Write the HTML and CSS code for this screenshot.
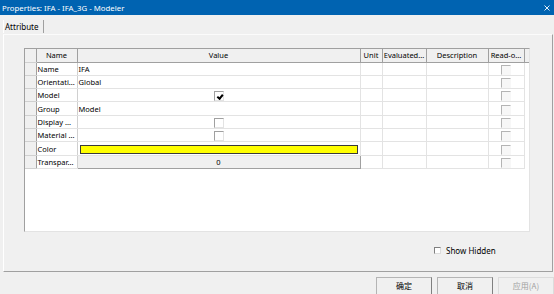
FILE: index.html
```html
<!DOCTYPE html>
<html lang="en">
<head>
    <meta charset="UTF-8">
    <meta name="viewport" content="width=device-width, initial-scale=1.0">
    <title>Properties: IFA - IFA_3G - Modeler</title>
    <link rel="stylesheet" href="styles.css">
</head>
<body>
    <div class="titlebar">
        <span>Properties: IFA - IFA_3G - Modeler</span>
        <svg class="close" width="6" height="6" viewBox="0 0 6 6">
            <path d="M0.5 0.5 L5.5 5.5 M5.5 0.5 L0.5 5.5" stroke="#fff" stroke-width="0.9" fill="none"/>
        </svg>
    </div>

    <div class="tabs">
        <div class="tab">Attribute</div>
    </div>

    <div class="panel">
        <div class="grid">
            <table>
                <colgroup>
                    <col style="width: 11px">
                    <col style="width: 41px">
                    <col style="width: 283px">
                    <col style="width: 22px">
                    <col style="width: 44px">
                    <col style="width: 62px">
                    <col style="width: 36px">
                    <col style="width: 6px">
                </colgroup>
                <thead>
                    <tr>
                        <th class="rowhead"></th>
                        <th>Name</th>
                        <th>Value</th>
                        <th>Unit</th>
                        <th>Evaluated...</th>
                        <th>Description</th>
                        <th>Read-o...</th>
                        <th class="stub"></th>
                    </tr>
                </thead>
                <tbody>
                    <tr>
                        <td class="rowhead"></td><td class="name">Name</td><td>IFA</td>
                        <td></td><td></td><td></td><td class="center"><span class="check disabled"></span></td><td class="stub"></td>
                    </tr>
                    <tr>
                        <td class="rowhead"></td><td class="name">Orientati...</td><td>Global</td>
                        <td></td><td></td><td></td><td class="center"><span class="check disabled"></span></td><td class="stub"></td>
                    </tr>
                    <tr>
                        <td class="rowhead"></td><td class="name">Model</td>
                        <td class="center"><span class="check checked"></span></td>
                        <td></td><td></td><td></td><td class="center"><span class="check disabled"></span></td><td class="stub"></td>
                    </tr>
                    <tr>
                        <td class="rowhead"></td><td class="name">Group</td><td>Model</td>
                        <td></td><td></td><td></td><td class="center"><span class="check disabled"></span></td><td class="stub"></td>
                    </tr>
                    <tr>
                        <td class="rowhead"></td><td class="name">Display ...</td>
                        <td class="center"><span class="check"></span></td>
                        <td></td><td></td><td></td><td class="center"><span class="check disabled"></span></td><td class="stub"></td>
                    </tr>
                    <tr>
                        <td class="rowhead"></td><td class="name">Material ...</td>
                        <td class="center"><span class="check"></span></td>
                        <td></td><td></td><td></td><td class="center"><span class="check disabled"></span></td><td class="stub"></td>
                    </tr>
                    <tr>
                        <td class="rowhead"></td><td class="name">Color</td>
                        <td class="color"><div class="swatch"></div></td>
                        <td></td><td></td><td></td><td class="center"><span class="check disabled"></span></td><td class="stub"></td>
                    </tr>
                    <tr>
                        <td class="rowhead"></td><td class="name">Transpar...</td>
                        <td class="spin">0</td>
                        <td></td><td></td><td></td><td class="center"><span class="check disabled"></span></td><td class="stub"></td>
                    </tr>
                </tbody>
            </table>
        </div>

        <label class="show-hidden">
            <span class="small-check"></span>
            Show Hidden
        </label>
    </div>

    <div class="footer">
        <button>确定</button>
        <button>取消</button>
        <button class="disabled-btn">应用(A)</button>
    </div>
</body>
</html>
```

FILE: styles.css
```css
body {
    margin: 0;
    width: 554px;
    height: 294px;
    overflow: hidden;
    background-color: #f0f0f0;
    font-family: "Noto Sans", "Noto Sans CJK SC", sans-serif;
    font-size: 8px;
    color: #000;
    display: flex;
    flex-direction: column;
}

.titlebar {
    height: 15px;
    flex-shrink: 0;
    background-color: #0063b1;
    color: #fff;
    display: flex;
    align-items: center;
    justify-content: space-between;
    padding: 0 4px 0 2px;
    font-size: 7.8px;
}
.close {
    display: block;
}

.tabs {
    height: 19px;
    flex-shrink: 0;
    display: flex;
    align-items: flex-end;
    padding-left: 3px;
}
.tab {
    height: 13px;
    line-height: 13px;
    padding: 0 4px 0 1px;
    border-left: 1px solid #fff;
    border-right: 1px solid #a0a0a0;
    margin-bottom: 1px;
}

.panel {
    box-sizing: border-box;
    height: 238px;
    flex-shrink: 0;
    margin: 0 1px 0 3px;
    border-top: 1px solid #fbfbfb;
    border-left: 1px solid #fff;
    border-right: 1px solid #a0a0a0;
    border-bottom: 1px solid #a0a0a0;
    padding: 13px 0 0 20px;
}

.grid {
    width: 504px;
    height: 182px;
    background: #fff;
    border-top: 1px solid #a0a0a0;
    border-left: 1px solid #a0a0a0;
    border-right: 1px solid #e3e3e3;
    border-bottom: 1px solid #e3e3e3;
    overflow: hidden;
}
table {
    width: 504px;
    table-layout: fixed;
    border-collapse: collapse;
    font-size: 7.5px;
}
th, td {
    padding: 0 0 0 1px;
    white-space: nowrap;
    overflow: hidden;
    text-align: left;
    font-weight: normal;
    border: 1px solid #e3e3e3;
    border-top: none;
    border-left: none;
}
thead tr {
    height: 13px;
}
tbody tr {
    height: 13.33px;
}
th {
    background: #f0f0f0;
    text-align: center;
    padding: 0;
    border-right: 1px solid #a0a0a0;
    border-bottom: 1px solid #a0a0a0;
}
.rowhead {
    background: #f0f0f0;
    border-right: 1px solid #a0a0a0;
    border-bottom: 1px solid #d0d0d0;
    padding: 0;
}
.stub {
    border: none;
    padding: 0;
}
th.stub {
    border-right: 1px solid #a0a0a0;
    border-bottom: 1px solid #a0a0a0;
}
td.name {
    border-right: 1px solid #d0d0d0;
}
.center {
    text-align: center;
    padding: 0;
    line-height: 0;
}

.check {
    display: inline-block;
    box-sizing: border-box;
    width: 10px;
    height: 10px;
    margin-top: 2px;
    background: #fff;
    border-top: 1px solid #a0a0a0;
    border-left: 1px solid #a0a0a0;
    border-right: 1px solid #e3e3e3;
    border-bottom: 1px solid #e3e3e3;
    position: relative;
}
.check.checked::after {
    content: "";
    position: absolute;
    left: 2px;
    top: 1px;
    width: 4px;
    height: 2px;
    border-left: 2px solid #000;
    border-bottom: 2px solid #000;
    transform: rotate(-50deg) translate(-1px, 1px);
}
.check.disabled {
    background: #f7f7f7;
    border-top-color: #b4b4b4;
    border-left-color: #b4b4b4;
    border-right-color: #f7f7f7;
    border-bottom-color: #f7f7f7;
}

.color {
    padding: 0;
}
.swatch {
    box-sizing: border-box;
    height: 9px;
    margin: 2px 2px 1px 2px;
    background: #ffff00;
    border: 1px solid #3a3a3a;
}
.spin {
    background: #f0f0f0;
    text-align: center;
    padding: 0;
    border-right: 1px solid #a0a0a0;
    border-bottom: 1px solid #a0a0a0;
}

.show-hidden {
    display: flex;
    align-items: center;
    gap: 5px;
    width: max-content;
    margin: 13px 0 0 410px;
}
.small-check {
    box-sizing: border-box;
    width: 7px;
    height: 7px;
    background: #fff;
    border-top: 1px solid #808080;
    border-left: 1px solid #808080;
    border-right: 1px solid #dcdcdc;
    border-bottom: 1px solid #dcdcdc;
}

.footer {
    flex-shrink: 0;
    display: flex;
    justify-content: flex-end;
    gap: 5px;
    padding: 5px 0 0 0;
}
button {
    width: 56px;
    height: 22px;
    padding: 0;
    font-family: "Noto Sans CJK SC", "Noto Sans", sans-serif;
    font-size: 8px;
    line-height: 16px;
    color: #000;
    background-color: #f0f0f0;
    border: 1px solid #b4b4b4;
    border-right-color: #808080;
    border-bottom-color: #808080;
    display: flex;
    justify-content: center;
    align-items: flex-start;
}
.disabled-btn {
    color: #a0a0a0;
    border-color: #dcdcdc;
}
```
